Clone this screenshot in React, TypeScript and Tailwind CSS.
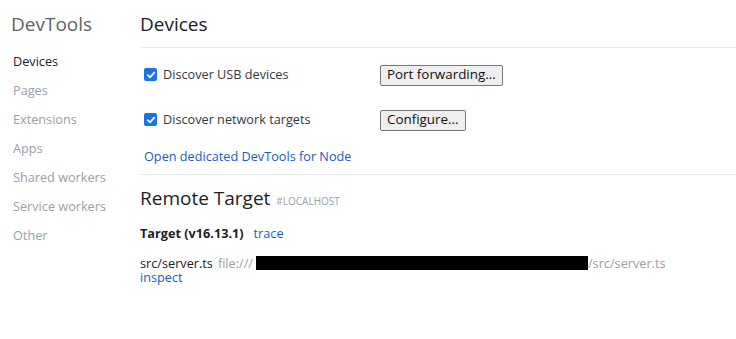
const navItems = ["Devices", "Pages", "Extensions", "Apps", "Shared workers", "Service workers", "Other"];

function Check() {
  return (
    <span className="flex h-[13px] w-[13px] items-center justify-center rounded-[2px] bg-[#1a73e8]">
      <svg width="10" height="10" viewBox="0 0 10 10" fill="none">
        <path d="M1.8 5.2 L4 7.3 L8.3 2.6" stroke="white" strokeWidth="1.8" strokeLinecap="round" strokeLinejoin="round" />
      </svg>
    </span>
  );
}

function Btn({ label }: { label: string }) {
  return (
    <button className="h-[21px] rounded-[2px] border border-[#767676] bg-[#efefef] px-[6px] text-[13.4px] leading-none text-[#111]">
      {label}
    </button>
  );
}

export default function App() {
  return (
    <div className="flex h-[339px] w-[736px] bg-white font-['Open_Sans',sans-serif] text-[12.7px] text-[#303942]">
      <aside className="w-[140px] shrink-0 pl-[11px] pt-[10px]">
        <h1 className="h-[28px] text-[19px] leading-[28px] text-[#5f6368]">DevTools</h1>
        <nav className="mt-[15px] flex flex-col pl-[2px]">
          {navItems.map((item, i) => (
            <div key={item} className={`h-[29px] leading-[17px] ${i === 0 ? "text-[#202124]" : "text-[#9aa0a6]"}`}>
              {item}
            </div>
          ))}
        </nav>
      </aside>

      <main className="flex-1 pt-[10px]">
        <h2 className="h-[28px] text-[19px] leading-[28px] text-[#202124]">Devices</h2>
        <div className="mt-[9px] border-t border-[#e8e8e8]" />
        <div className="pl-[4px]">
          <div className="mt-[15px] flex h-[24px] items-center">
            <div className="flex w-[236px] items-center gap-[6px]">
              <Check />
              <span>Discover USB devices</span>
            </div>
            <Btn label="Port forwarding..." />
          </div>
          <div className="mt-[21px] flex h-[24px] items-center">
            <div className="flex w-[236px] items-center gap-[6px]">
              <Check />
              <span>Discover network targets</span>
            </div>
            <Btn label="Configure..." />
          </div>
          <a className="mt-[16px] block leading-[17px] text-[#1a5bc6]">Open dedicated DevTools for Node</a>
        </div>
        <div className="mt-[9px] border-t border-[#e8e8e8]" />

        <div className="mt-[9px] flex items-baseline gap-[6px]">
          <h2 className="text-[19px] leading-[28px] text-[#202124]">Remote Target</h2>
          <span className="text-[10px] text-[#9aa0a6]">#LOCALHOST</span>
        </div>
        <div className="mt-[13px] flex items-baseline gap-[10px] leading-[17px]">
          <span className="font-bold text-[#202124]">Target (v16.13.1)</span>
          <a className="text-[#1a5bc6]">trace</a>
        </div>
        <div className="mt-[14px] flex h-[14px] items-center leading-[14px]">
          <span className="text-[#202124]">src/server.ts</span>
          <span className="ml-[5px] text-[#9aa0a6]">file:///</span>
          <span className="ml-[3px] h-[14px] w-[332px] bg-black" />
          <span className="text-[#9aa0a6]">/src/server.ts</span>
        </div>
        <a className="block leading-[14px] text-[#1a5bc6]">inspect</a>
      </main>
    </div>
  );
}
